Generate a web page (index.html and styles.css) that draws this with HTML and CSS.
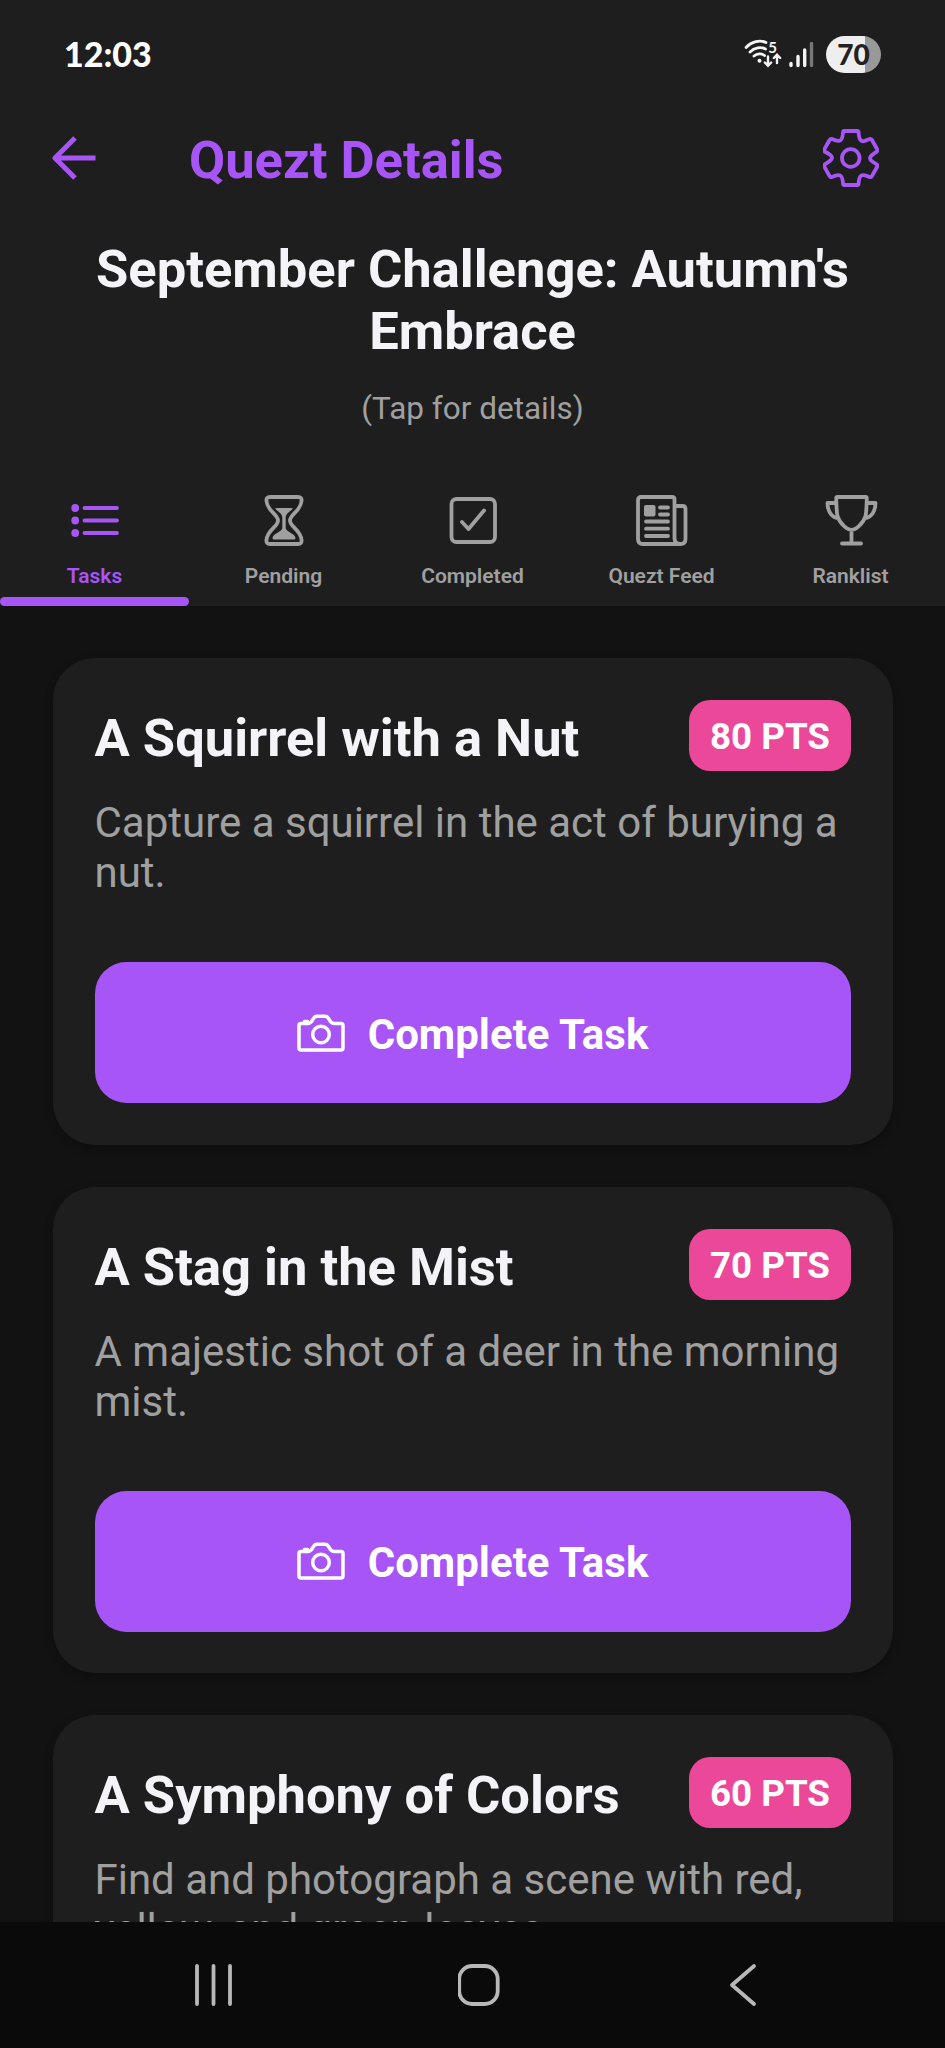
FILE: index.html
```html
<!DOCTYPE html>
<html lang="en">
<head>
<meta charset="utf-8">
<title>Quezt Details</title>
<link rel="stylesheet" href="styles.css">
</head>
<body>
<svg class="defs" aria-hidden="true">
  <symbol id="camera" viewBox="0 0 48 38">
    <path d="M4 9.5H10.5C13 9.5 14.5 8 15.5 6L17 3.8Q18 2.2 20 2.2H28Q30 2.2 31 3.8L32.5 6C33.5 8 35 9.5 37.500 9.500H44Q46 9.500 46 11.500V34Q46 36 44 36H4Q2 36 2 34V11.500Q2 9.500 4 9.500Z"/>
    <circle cx="24" cy="20.500" r="8.300"/>
    <path d="M7.500 8V7.500H10.500V8"/>
  </symbol>
</svg>
<div class="screen">
  <header class="top">
    <div class="status">
      <span class="clock">12:03</span>
      <div class="status-icons">
        <svg class="wifi" viewBox="0 0 38 30" fill="none" stroke="#f4f4f4" stroke-width="2.800" stroke-linecap="round">
          <path d="M2 8.500C7.500 2.500 16 0.500 22 3.500"/><path d="M6 13C10.500 8.500 17 7.500 21.500 10"/><path d="M10 17C13 14.500 17.500 14 20.500 16.500"/>
          <circle cx="15.500" cy="21.800" r="2" fill="#f4f4f4" stroke="none"/>
          <path d="M24 17.500V26M20.800 23.500L24 26.700L27.200 23.500M33 24V15.800M29.800 19L33 15.800L36.200 19" stroke-width="2.400"/>
          <text x="24.300" y="13.500" class="wifi-band">5</text>
        </svg>
        <svg class="signal" viewBox="0 0 25 27" stroke-width="3.400" stroke-linecap="round">
          <path d="M2 22.500V24.500M9 15.500V24.500M15.700 9V24.500" stroke="#f4f4f4"/><path d="M22.500 2.500V24.500" stroke="#777"/>
        </svg>
        <span class="battery">70</span>
      </div>
    </div>
    <div class="nav">
      <svg class="back" viewBox="0 0 44 44"><path d="M23 2L3 22L23 42M3 22H43.500"/></svg>
      <h1>Quezt Details</h1>
      <svg class="gear" viewBox="0 0 56 58">
        <path d="M21 2H34Q35.500 2 35.600 3.500C36 10 37.500 14.500 44 11L46.500 10Q48 9.500 48.800 10.800L54.200 20.200Q54.900 21.500 53.800 22.500C48 26.500 44 29 50 33L53.800 35.500Q55 36.500 54.200 37.800L48.800 47.200Q48 48.500 46.500 48C39.500 44.500 36 45 35.600 54.500Q35.500 56 34 56H21.500Q20 56 20 54.500C19.500 45 16 44.500 9 48Q7.500 48.500 6.700 47.200L1.300 37.800Q.6 36.500 1.700 35.500C8 31.500 12 29 6 25L1.700 22.500Q.6 21.500 1.300 20.200L6.700 10.800Q7.500 9.500 9 10C16 13.500 19.500 13 20 3.500Q20 2 21 2Z"/>
        <circle cx="27.750" cy="29" r="8.800"/>
      </svg>
    </div>
    <div class="hero">
      <h2>September Challenge: Autumn's Embrace</h2>
      <p>(Tap for details)</p>
    </div>
    <nav class="tabs">
      <div class="tab active">
        <svg viewBox="0 0 54 54"><path d="M16.500 15H49M16.500 27.500H49M16.500 40H49"/><g class="solid"><circle cx="7.200" cy="15" r="3.900"/><circle cx="7.200" cy="27.500" r="3.900"/><circle cx="7.200" cy="40" r="3.900"/></g></svg>
        <span>Tasks</span>
      </div>
      <div class="tab">
        <svg viewBox="0 0 54 54"><path d="M13 4H41Q45 4 44.500 8C44 18 33 21 33 27.500S44 37 44.500 47Q45 51 41 51H13Q9 51 9.500 47C10 37 21 34 21 27.500S10 18 9.500 8Q9 4 13 4Z"/><path class="solid" d="M19 15H35Q36.500 15 35 16.500C31 20 28.700 21 28.700 25V35C28.700 39 38 40 38.500 45Q38.500 46.500 37 46.500H17Q15.500 46.500 15.500 45C16 40 25.300 39 25.300 35V25C25.300 21 23 20 19 16.500Q17.500 15 19 15Z"/></svg>
        <span>Pending</span>
      </div>
      <div class="tab">
        <svg viewBox="0 0 54 54"><rect x="5.500" y="6" width="43.500" height="43" rx="5"/><path d="M16 29L22.500 36L38 17.500"/></svg>
        <span>Completed</span>
      </div>
      <div class="tab">
        <svg viewBox="0 0 54 54"><path d="M39.500 46V6.500Q39.500 4 37 4H6Q3 4 3 7V46Q3 51 8 51H45.500Q50.500 51 50.500 46V16Q50.500 13 47.500 13H39.500M39.500 45Q39.500 51 45 51"/><rect class="solid" x="9" y="12" width="11.500" height="11.500" rx="2"/><path d="M25 14.500H33M25 21.500H33M11 28.500H33M11 35.700H33M11 43H33"/></svg>
        <span>Quezt Feed</span>
      </div>
      <div class="tab">
        <svg viewBox="0 0 54 54"><path d="M13.500 4H41.500Q42.800 4 42.800 5.500C42.500 14 42.500 19 41.500 23C39 31.500 31 37 27.500 37S16 31.500 13.500 23C12.500 19 12.500 14 12.200 5.500Q12.200 4 13.500 4ZM27.500 37V50.500M18 50.500H37M12 10H3.500C3.500 17 7 24.500 14 25M43 10H51.500C51.500 17 48 24.500 41 25"/></svg>
        <span>Ranklist</span>
      </div>
    </nav>
  </header>
  <main class="list">
    <article class="card">
      <div class="card-head"><h3>A Squirrel with a Nut</h3><span class="pts">80 PTS</span></div>
      <p>Capture a squirrel in the act of burying a nut.</p>
      <div class="btn"><svg><use href="#camera"/></svg><span>Complete Task</span></div>
    </article>
    <article class="card">
      <div class="card-head"><h3>A Stag in the Mist</h3><span class="pts">70 PTS</span></div>
      <p>A majestic shot of a deer in the morning mist.</p>
      <div class="btn"><svg><use href="#camera"/></svg><span>Complete Task</span></div>
    </article>
    <article class="card">
      <div class="card-head"><h3>A Symphony of Colors</h3><span class="pts">60 PTS</span></div>
      <p>Find and photograph a scene with red, yellow, and green leaves.</p>
      <div class="btn"><svg><use href="#camera"/></svg><span>Complete Task</span></div>
    </article>
  </main>
  <footer class="sysnav">
    <svg viewBox="0 0 44 44"><path d="M4 3V41M20.500 3V41M37 3V41"/></svg>
    <svg viewBox="0 0 44 44"><rect x="1.200" y="3" width="38.500" height="38" rx="13"/></svg>
    <svg viewBox="0 0 44 44"><path d="M32 3L10 22L32 41"/></svg>
  </footer>
</div>
</body>
</html>
```
FILE: styles.css
```css
* { box-sizing: border-box; }
body { margin: 0; background: #121212; font-family: Roboto, "Liberation Sans", sans-serif; }
h1, h2, h3, p { margin: 0; }
svg { display: block; flex: none; fill: none; }
.defs { width: 0; height: 0; position: absolute; }
.screen { width: 945px; height: 2048px; display: flex; flex-direction: column; overflow: hidden; }

.top { height: 606px; flex: none; background: #1e1e1e; display: flex; flex-direction: column; }
.status { height: 108px; padding: 0 64px 0 64px; display: flex; justify-content: space-between; align-items: center; }
.clock { font: 900 34px/40px Lato, sans-serif; color: #fff; }
.status-icons { display: flex; align-items: center; }
.wifi { width: 38px; height: 30px; margin-right: 7px; overflow: visible; }
.wifi-band { font: 700 15px Lato, sans-serif; fill: #f4f4f4; stroke: none; }
.signal { width: 25px; height: 27px; margin-right: 12px; }
.battery { width: 55px; height: 37px; border-radius: 19px; background: linear-gradient(90deg, #eee 70%, #999 70%); font: 900 28px/37px Lato, sans-serif; color: #222; text-align: center; }

.nav { height: 103px; padding: 0 66px 0 52px; display: flex; align-items: center; }
.nav svg { margin-bottom: 4px; stroke: #a855f7; stroke-linejoin: round; }
.back { width: 44px; height: 44px; stroke-width: 5; }
.nav h1 { margin-left: 93px; flex: 1; font-size: 52.500px; line-height: 62px; color: #a855f7; }
.gear { width: 56px; height: 58px; stroke-width: 3.800; }

.hero { height: 260px; padding: 27px 80px 0; text-align: center; }
.hero h2 { font-size: 52.500px; line-height: 62px; color: #f4f4f8; }
.hero p { margin-top: 28px; font-size: 31.500px; line-height: 37px; color: #a0a0a0; }

.tabs { flex: 1; display: grid; grid-template-columns: repeat(5, 1fr); }
.tab { display: flex; flex-direction: column; align-items: center; padding-top: 22px; color: #a0a0a0; border-bottom: 9px solid transparent; }
.tab svg { width: 54px; height: 54px; stroke: currentColor; stroke-width: 3.800; stroke-linecap: round; stroke-linejoin: round; }
.tab .solid { fill: currentColor; stroke: none; }
.tab span { margin-top: 17px; font-size: 21px; line-height: 25px; font-weight: 600; }
.tab.active { color: #a855f7; position: relative; }
.tab.active::after { content: ""; position: absolute; left: 0; right: 0; bottom: -9px; height: 9px; border-radius: 4.500px; background: #a855f7; }

.list { flex: 1; min-height: 0; overflow: hidden; padding: 52px 52.500px 0; display: flex; flex-direction: column; gap: 42px; }
.card { flex: none; height: 486.500px; padding: 42px; border-radius: 42px; background: #1e1e1e; box-shadow: 0 4px 8px rgba(0, 0, 0, .25); }
.card-head { height: 71px; display: flex; align-items: center; justify-content: space-between; }
.card h3 { font-size: 52.500px; line-height: 62px; padding-top: 5px; color: #f4f4f8; }
.pts { height: 71px; padding: 0 20.500px; border-radius: 21px; background: #ec4899; color: #fff; font-size: 36.750px; font-weight: 700; line-height: 74px; }
.card p { margin-top: 27px; font-size: 42px; line-height: 50px; color: #a0a0a0; }
.btn { margin-top: 64px; height: 141px; border-radius: 31.500px; background: #a855f7; color: #fff; display: flex; align-items: center; justify-content: center; gap: 23px; font-size: 42px; font-weight: 700; }
.btn span { padding-top: 3px; }
.btn svg { width: 48px; height: 38px; stroke: #fff; stroke-width: 3.500; stroke-linejoin: round; stroke-linecap: round; }

.sysnav { height: 126px; flex: none; background: #0a0a0a; padding: 0 179px 0 193px; display: flex; align-items: center; justify-content: space-between; }
.sysnav svg { width: 44px; height: 44px; stroke: #b8b8b8; stroke-width: 3.800; stroke-linecap: round; stroke-linejoin: round; }
```
